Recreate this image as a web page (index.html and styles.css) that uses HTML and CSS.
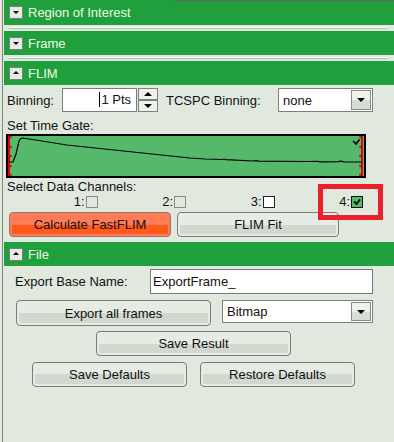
FILE: index.html
```html
<!DOCTYPE html>
<html lang="en">
<head>
    <meta charset="UTF-8">
    <title>FLIM panel</title>
    <link rel="stylesheet" href="styles.css">
</head>
<body>
    <div class="topline"></div>
    <div class="panel">
        <!-- collapsed sections -->
        <div class="head"><span class="tog down"></span>Region of Interest</div>
        <div class="divider"></div>
        <div class="head"><span class="tog down"></span>Frame</div>
        <div class="divider"></div>

        <!-- FLIM -->
        <div class="head"><span class="tog up"></span>FLIM</div>
        <div class="flim">
            <div class="row1">
                <span class="lbl-bin">Binning:</span>
                <div class="num"><span class="caret"></span>1 Pts</div>
                <div class="spin"><span class="sp"><i class="tri-up"></i></span><span class="sp"><i class="tri-dn"></i></span></div>
                <span class="lbl-tc">TCSPC Binning:</span>
                <div class="combo combo-tc"><span class="val">none</span><span class="drop"><i class="tri-dn"></i></span></div>
            </div>
            <div class="cap">Set Time Gate:</div>
            <div class="gate">
                <svg width="356" height="40" viewBox="0 0 356 40">
                    <rect x="0" y="0" width="2" height="40" fill="#e8000c"/>
                    <rect x="353" y="0" width="2" height="40" fill="#e8000c"/>
                    <g fill="#e8000c">
                        <circle cx="2.5" cy="1" r="1.3"/><circle cx="2.5" cy="11" r="1.3"/><circle cx="2.5" cy="20" r="1.3"/><circle cx="2.5" cy="30" r="1.3"/><circle cx="2.5" cy="39" r="1.3"/>
                        <circle cx="352.5" cy="1" r="1.3"/><circle cx="352.5" cy="11" r="1.3"/><circle cx="352.5" cy="20" r="1.3"/><circle cx="352.5" cy="30" r="1.3"/><circle cx="352.5" cy="39" r="1.3"/>
                    </g>
                    <path d="M1,26 H5 L8,18 L11,5 L13,2.5 L15,2 L59,9 L125,16 L182,22 L197,23 L214,23.5 L216,23 L218,23.6 L245,25 L248,24.6 L251,25.2 L300,25.5 L310,25.3 L312,25.8 L330,25.7 L333,25.2 L336,25.8 L354,26" fill="none" stroke="#000" stroke-width="1.2"/>
                    <path d="M345,5 L348,8 L351.5,3.5" fill="none" stroke="#000" stroke-width="1.6"/>
                </svg>
            </div>
            <div class="cap cap2">Select Data Channels:</div>
            <div class="chans">
                <span class="ch">1:<span class="box"></span></span>
                <span class="ch">2:<span class="box"></span></span>
                <span class="ch">3:<span class="box white"></span></span>
                <span class="ch">4:<span class="box on">
                    <svg width="10" height="10" viewBox="0 0 10 10"><path d="M2,4.5 L4.5,7 L8,2.5" fill="none" stroke="#000" stroke-width="1.8"/></svg>
                </span></span>
            </div>
            <div class="btns">
                <button class="btn hot w162">Calculate FastFLIM</button>
                <button class="btn w162">FLIM Fit</button>
            </div>
            <div class="mark"></div>
        </div>

        <!-- File -->
        <div class="head"><span class="tog up"></span>File</div>
        <div class="file">
            <div class="frow r-name">
                <span class="lbl-name">Export Base Name:</span>
                <div class="text-in">ExportFrame_</div>
            </div>
            <div class="frow r-exp">
                <button class="btn b-exp">Export all frames</button>
                <div class="combo combo-fmt"><span class="val">Bitmap</span><span class="drop"><i class="tri-dn"></i></span></div>
            </div>
            <div class="frow r-save">
                <button class="btn b-save">Save Result</button>
            </div>
            <div class="frow r-def">
                <button class="btn b-def">Save Defaults</button>
                <button class="btn b-def">Restore Defaults</button>
            </div>
        </div>
    </div>
</body>
</html>
```

FILE: styles.css
```css
body{
    margin: 0;
    background-color: #e1e9df;
    font-family: "Liberation Sans", Arial, sans-serif;
    font-size: 13px;
    color: #111;
    height: 442px;
    overflow: hidden;
}
.topline{
    position: absolute;
    top: 0;
    left: 175px;
    right: 0;
    height: 1px;
    background-color: #666;
}
.panel{
    margin-left: 2px;
    border-left: 1px solid #7f8a7d;
    padding-left: 1px;
    height: 442px;
}
/* section headers */
.head{
    display: flex;
    align-items: center;
    height: 24px;
    padding-left: 5px;
    background-color: #20a03c;
    color: #f2fbe6;
    font-size: 13px;
}
.head:first-child{
    height: 25px;
}
.tog{
    position: relative;
    box-sizing: border-box;
    width: 14px;
    height: 13px;
    margin-right: 5px;
    border: 1px solid #7d7d7d;
    background-color: #e6ebe4;
}
.tog::after{
    content: '';
    position: absolute;
    left: 3px;
    width: 0;
    height: 0;
    border-left: 3px solid transparent;
    border-right: 3px solid transparent;
}
.tog.down::after{
    top: 4px;
    border-top: 3px solid #000;
}
.tog.up::after{
    top: 3px;
    border-bottom: 3px solid #000;
}
.divider{
    box-sizing: border-box;
    height: 6px;
    padding: 2px 7px 0 5px;
}
.divider::before{
    content: '';
    display: block;
    border-top: 1px solid #fff;
    border-bottom: 1px solid #a8c0a5;
}
/* triangles */
.tri-up, .tri-dn{
    display: block;
    width: 0;
    height: 0;
    border-left: 4px solid transparent;
    border-right: 4px solid transparent;
}
.tri-up{
    border-bottom: 4px solid #000;
}
.tri-dn{
    border-top: 4px solid #000;
}
/* FLIM */
.flim{
    position: relative;
    padding-top: 3px;
}
.row1{
    display: flex;
    align-items: center;
    padding-left: 3px;
    height: 24px;
}
.lbl-bin{
    width: 55px;
}
.num{
    box-sizing: border-box;
    width: 75px;
    height: 24px;
    line-height: 22px;
    padding-right: 5px;
    text-align: right;
    background-color: #fff;
    border: 1px solid #7a7a7a;
}
.caret{
    display: inline-block;
    width: 1px;
    height: 15px;
    margin-right: 1px;
    vertical-align: -3px;
    background-color: #000;
}
.spin{
    display: flex;
    flex-direction: column;
    margin-left: 1px;
}
.sp{
    box-sizing: border-box;
    display: flex;
    align-items: center;
    justify-content: center;
    width: 20px;
    height: 12px;
    border: 1px solid #808080;
    background-color: #eef2ec;
}
.lbl-tc{
    width: 112px;
    margin-left: 8px;
}
.combo{
    box-sizing: border-box;
    display: flex;
    align-items: center;
    justify-content: space-between;
    background-color: #fff;
    border: 1px solid #7f7f7f;
    padding: 1px;
}
.combo .val{
    padding-left: 3px;
}
.drop{
    box-sizing: border-box;
    display: flex;
    align-items: center;
    justify-content: center;
    width: 20px;
    height: 100%;
    border: 1px solid #8a8a8a;
    background: linear-gradient(#eef2ec 50%, #d6ddd4 50%);
}
.combo-tc{
    width: 95px;
    height: 24px;
}
.cap{
    margin-top: 5px;
    padding-left: 3px;
    line-height: 17px;
}
.gate{
    width: 360px;
    height: 44px;
    box-sizing: border-box;
    margin-left: 2px;
    border: 2px solid #000;
    background-color: #55b86b;
}
.gate svg{
    display: block;
}
.cap2{
    margin-top: 1px;
    line-height: 16px;
}
.chans{
    display: grid;
    grid-template-columns: repeat(4, 88.5px);
    justify-items: end;
    margin-left: 5px;
    height: 14px;
}
.ch{
    display: flex;
    align-items: center;
    line-height: 14px;
}
.box{
    box-sizing: border-box;
    display: flex;
    align-items: center;
    justify-content: center;
    width: 12px;
    height: 12px;
    margin-left: 1px;
    border: 1px solid #8c8c8c;
}
.box.white{
    background-color: #fff;
    border-color: #222;
}
.box.on{
    background-color: #55b86b;
    border-color: #111;
}
.btns{
    display: flex;
    gap: 6px;
    margin-top: 3px;
    margin-left: 5px;
}
/* buttons */
.btn{
    box-sizing: border-box;
    height: 25px;
    padding: 0;
    border: 1px solid #7a7a7a;
    border-radius: 4px;
    font-family: "Liberation Sans", Arial, sans-serif;
    font-size: 13px;
    color: #111;
    background: linear-gradient(#e6ece4 50%, #d1d9cf 50%);
    box-shadow: inset 2px 0 0 #e6ece4, inset -2px 0 0 #e6ece4, inset 0 -2px 0 #e6ece4;
}
.btn.hot{
    border-color: #8f7a70;
    background: linear-gradient(#ff7c56 50%, #ff5a1d 50%);
    box-shadow: inset 2px 0 0 #ff7c56, inset -2px 0 0 #ff7c56, inset 0 -2px 0 #ff7c56;
}
.w162{
    width: 162px;
}
.mark{
    position: absolute;
    left: 314px;
    top: 99px;
    width: 65px;
    height: 36px;
    box-sizing: border-box;
    border: 5px solid #e8212b;
}
.flim + .head{
    margin-top: 5px;
}
/* File */
.file{
    padding-top: 3px;
}
.frow{
    display: flex;
    align-items: center;
}
.r-name{
    padding-left: 11px;
}
.lbl-name{
    width: 135px;
}
.text-in{
    box-sizing: border-box;
    width: 223px;
    height: 25px;
    line-height: 23px;
    padding-left: 2px;
    background-color: #fff;
    border: 1px solid #7a7a7a;
}
.r-exp{
    margin-top: 6px;
    padding-left: 12px;
    align-items: flex-start;
}
.b-exp{
    width: 195px;
    height: 26px;
}
.combo-fmt{
    width: 151px;
    height: 23px;
    margin-left: 11px;
}
.r-save{
    margin-top: 5px;
    padding-left: 92px;
}
.b-save{
    width: 195px;
}
.r-def{
    margin-top: 6px;
    padding-left: 28px;
    gap: 13px;
}
.b-def{
    width: 155px;
}
```
